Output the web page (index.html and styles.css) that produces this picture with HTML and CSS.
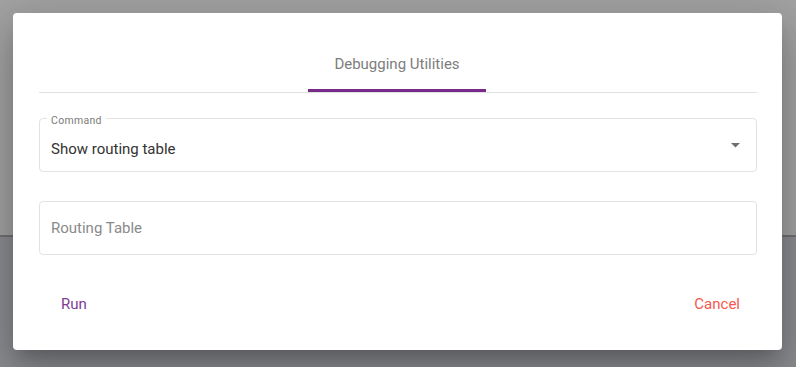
FILE: index.html
```html
<!DOCTYPE html>
<html>
<head>
<meta charset="utf-8">
<link rel="stylesheet" href="styles.css">
</head>
<body>
<div class="page">
  <div class="page-top"></div>
  <div class="page-bottom"></div>
</div>
<div class="dialog">
  <div class="tabs">
    <div class="tab">Debugging Utilities</div>
  </div>
  <div class="field select">
    <span class="label">Command</span>
    <span class="value">Show routing table</span>
    <svg class="arrow" width="9" height="5" viewBox="0 0 9 5"><path d="M0 0 L9 0 L4.5 4.5 Z" fill="#6f6f6f"/></svg>
  </div>
  <div class="field">
    <span class="placeholder">Routing Table</span>
  </div>
  <div class="actions">
    <button class="btn run">Run</button>
    <button class="btn cancel">Cancel</button>
  </div>
</div>
</body>
</html>
```
FILE: styles.css
```css
html, body { margin: 0; padding: 0; }
body {
  width: 796px;
  height: 367px;
  overflow: hidden;
  position: relative;
  font-family: Roboto, "Liberation Sans", sans-serif;
  background: #8c8d91;
}
.page { display: flex; flex-direction: column; height: 367px; }
.page-top { height: 235px; background: #a2a2a2; border-bottom: 2px solid #707072; }
.page-bottom { flex: 1; background: #8b8c90; }
.dialog {
  position: absolute;
  left: 13px;
  top: 13px;
  width: 769px;
  height: 337px;
  box-sizing: border-box;
  background: #fff;
  border-radius: 4px;
  box-shadow: 0 11px 15px -7px rgba(0,0,0,.2), 0 24px 38px 3px rgba(0,0,0,.14), 0 9px 46px 8px rgba(0,0,0,.12);
  padding: 0 25px 0 26px;
  display: flex;
  flex-direction: column;
}
.tabs {
  margin-top: 31px;
  height: 48px;
  border-bottom: 1px solid #e0e0e0;
  display: flex;
  justify-content: center;
}
.tab {
  width: 178px;
  margin-right: 2px;
  height: 48px;
  box-sizing: border-box;
  border-bottom: 3px solid #772a8a;
  margin-bottom: -1px;
  display: flex;
  align-items: center;
  justify-content: center;
  font-size: 15px;
  color: #7d7d7d;
  padding-bottom: 5px;
}
.field {
  position: relative;
  height: 54px;
  box-sizing: border-box;
  border: 1px solid #e2e2e2;
  border-radius: 4px;
  display: flex;
  align-items: center;
  padding-left: 11px;
}
.field.select { margin-top: 25px; }
.field + .field { margin-top: 29px; }
.label {
  position: absolute;
  left: 7px;
  top: -4px;
  background: #fff;
  padding: 0 4px;
  font-size: 10.5px;
  letter-spacing: 0.3px;
  color: #7a7a7a;
  line-height: 11px;
}
.value { font-size: 15px; color: #333; padding-top: 8px; }
.placeholder { font-size: 15px; color: #8a8a8a; }
.arrow { position: absolute; right: 16px; top: 24px; }
.actions {
  margin-top: 40px;
  display: flex;
  justify-content: space-between;
  padding: 0 17px 0 22px;
}
.btn {
  border: 0;
  background: none;
  padding: 0;
  font-family: Roboto, "Liberation Sans", sans-serif;
  font-size: 15px;
}
.run { color: #7d3c96; }
.cancel { color: #f5574d; }
```
